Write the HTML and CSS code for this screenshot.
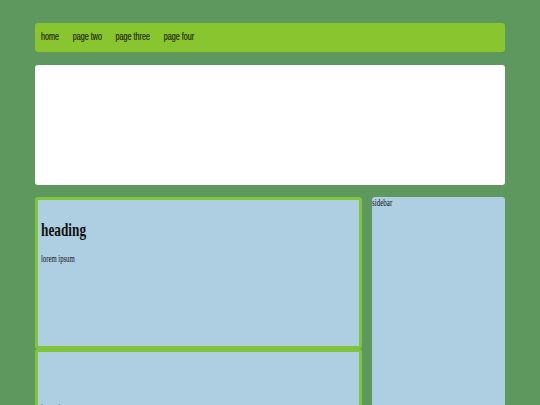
FILE: index.html
```html
<!DOCTYPE html>
<html lang="en">
<head>
<meta charset="utf-8">
<title>Layout</title>
<link rel="stylesheet" href="styles.css">
</head>
<body>
  <nav class="nav">
    <ul class="nav-list">
      <li><a href="#">home</a></li>
      <li><a href="#">page two</a></li>
      <li><a href="#">page three</a></li>
      <li><a href="#">page four</a></li>
    </ul>
  </nav>
  <header class="banner"></header>
  <div class="layout">
    <main class="main">
      <article class="card card-first">
        <h1 class="heading">heading</h1>
        <p class="text">lorem ipsum</p>
      </article>
      <article class="card card-second">
        <p class="text text-second">lorem ipsum</p>
      </article>
    </main>
    <aside class="sidebar">
      <p class="text side-text">sidebar</p>
    </aside>
  </div>
</body>
</html>
```

FILE: styles.css
```css
html, body {
  margin: 0;
  padding: 0;
}

body {
  background: #5f985e;
  padding: 23px 35px 0;
  height: 405px;
  box-sizing: border-box;
  overflow: hidden;
  font-family: "Liberation Serif", "Times New Roman", serif;
  color: #111;
}

.nav {
  height: 29px;
  background: #89c52e;
  border-radius: 3px;
  display: flex;
  align-items: center;
  padding-left: 6px;
}

.nav-list {
  list-style: none;
  margin: 0 0 5px;
  padding: 0;
  display: flex;
  gap: 19px;
  transform: scaleX(0.72);
  transform-origin: left center;
}

.nav-list a {
  font-family: "Liberation Sans", Arial, sans-serif;
  font-size: 10px;
  color: #34420a;
  text-decoration: none;
  text-shadow: 0 0 0.5px #34420a;
}

.banner {
  margin-top: 13px;
  height: 120px;
  background: #ffffff;
  border-radius: 3px;
}

.layout {
  margin-top: 12px;
  display: grid;
  grid-template-columns: 327px 133px;
  gap: 10px;
  align-items: start;
}

.main {
  display: flex;
  flex-direction: column;
}

.card {
  box-sizing: border-box;
  height: 152px;
  border: 3px solid #7ec53b;
  border-radius: 3px;
  background: #aecfe2;
  padding: 0 3px;
  overflow: hidden;
}

.heading {
  margin: 19px 0 0;
  font-size: 19px;
  line-height: 22px;
  font-weight: bold;
  transform: scaleX(0.7);
  transform-origin: left top;
}

.text {
  margin: 12px 0 0;
  font-size: 10px;
  line-height: 12px;
  transform: scaleX(0.67);
  transform-origin: left top;
}

.text-second {
  margin-top: 50px;
}

.sidebar {
  height: 260px;
  background: #aecfe2;
  border-radius: 3px;
}

.side-text {
  margin: 0;
  transform: scaleX(0.7);
}
```
